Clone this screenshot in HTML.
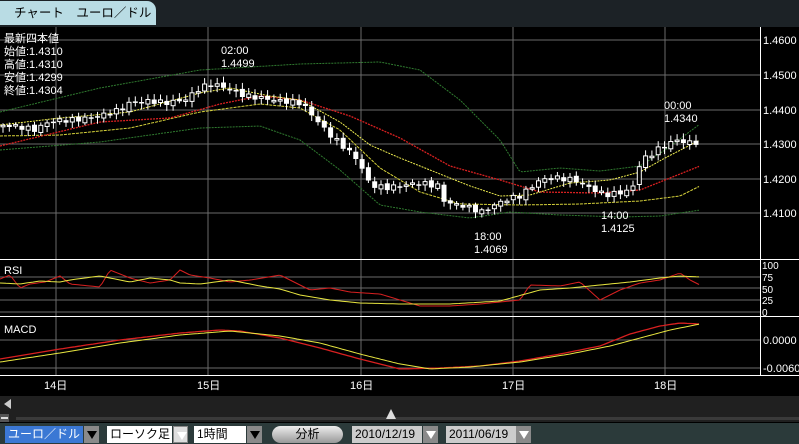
<!DOCTYPE html>
<html><head><meta charset="utf-8">
<style>
html,body{margin:0;padding:0;background:#000;width:799px;height:444px;overflow:hidden;font-family:"Liberation Sans","Noto Sans CJK JP",sans-serif}
#top{position:absolute;left:0;top:0;width:799px;height:27px;background:#1c2226}
#tab{position:absolute;left:0;top:1px;width:156px;height:24px;background:#b9dce4;border-radius:0 9px 0 0;color:#000;font-size:12.5px;line-height:24px;padding-left:14px;box-sizing:border-box;white-space:nowrap}
svg{position:absolute;left:0;top:0}
#scroll{position:absolute;left:0;top:396px;width:799px;height:26px;background:#202020}
#tb{position:absolute;left:0;top:423px;width:799px;height:21px;background:#2b3a3a}
.b{position:absolute;top:3px;height:17px;font-size:12px;line-height:17px;box-sizing:border-box;padding-left:3px;color:#000;white-space:nowrap;overflow:hidden}
.ar{position:absolute;top:3px;height:17px;width:15px;background:#8a8a8a}
.ar:after{content:"";position:absolute;left:3px;top:5px;border-left:5px solid transparent;border-right:5px solid transparent;border-top:8px solid #000}
.ar.w:after{border-top-color:#fff}
</style></head><body>
<div id="top"><div id="tab">チャート　ユーロ／ドル</div></div>
<svg id="s" width="799" height="444" xmlns="http://www.w3.org/2000/svg" font-family="Liberation Sans, Noto Sans CJK JP, sans-serif" font-size="11"></svg>
<div id="scroll">
<div style="position:absolute;left:4px;top:3px;width:0;height:0;border-top:5px solid transparent;border-bottom:5px solid transparent;border-right:7px solid #ccc"></div>
<div style="position:absolute;left:16px;top:21px;width:783px;height:3px;background:#3a3a3a"></div>
<div style="position:absolute;left:0;top:18px;width:9px;height:8px;background:#555"><div style="position:absolute;left:1px;top:3px;width:7px;height:2px;background:#ddd"></div></div>
<div style="position:absolute;left:386px;top:13px;width:0;height:0;border-left:5px solid transparent;border-right:5px solid transparent;border-bottom:10px solid #ddd"></div>
</div>
<div id="tb">
<div class="b" style="left:5px;width:78px;background:#3b78d4;color:#fff">ユーロ／ドル</div>
<div class="ar" style="left:84px"></div>
<div class="b" style="left:107px;width:65px;background:#fff">ローソク足</div>
<div class="ar w" style="left:173px;background:#ddd;border:1px solid #888;box-sizing:border-box"></div>
<div class="b" style="left:194px;width:52px;background:#fff">1時間</div>
<div class="ar" style="left:247px"></div>
<div class="b" style="left:272px;width:71px;background:linear-gradient(#eee,#999);border-radius:9px;text-align:center;padding:0">分析</div>
<div class="b" style="left:352px;width:70px;background:#ccc">2010/12/19</div>
<div class="ar w" style="left:423px"></div>
<div class="b" style="left:446px;width:70px;background:#ccc">2011/06/19</div>
<div class="ar w" style="left:516px"></div>
</div>
<script>
(function(){
var s=document.getElementById('s'),h='';
function L(x1,y1,x2,y2,c,w,d){h+='<line x1="'+x1+'" y1="'+y1+'" x2="'+x2+'" y2="'+y2+'" stroke="'+c+'" stroke-width="'+(w||1)+'"'+(d?' stroke-dasharray="'+d+'"':'')+'/>';}
function T(x,y,t,c,a){h+='<text x="'+x+'" y="'+y+'" fill="'+(c||'#fff')+'"'+(a?' text-anchor="'+a+'"':'')+'>'+t+'</text>';}
function interp(k,x){for(var i=0;i<k.length-1;i++){if(x>=k[i][0]&&x<=k[i+1][0]){var t=(x-k[i][0])/(k[i+1][0]-k[i][0]);return k[i][1]+t*(k[i+1][1]-k[i][1]);}}return k[k.length-1][1];}
function P(k,c,d,w){var p='';for(var x=0;x<=700;x+=3){p+=(p?' ':'')+x+','+interp(k,x).toFixed(1);}h+='<polyline points="'+p+'" fill="none" stroke="'+c+'" stroke-width="'+(w||1)+'"'+(d?' stroke-dasharray="'+d+'"':'')+'/>';}
[40,75,110,144,179,213].forEach(function(y){L(0,y,760,y,'#6a6a6a');});
[277,288,300,312].forEach(function(y){L(0,y,760,y,'#6a6a6a');});
[340,368].forEach(function(y){L(0,y,760,y,'#6a6a6a');});
[56,208,361,513,665].forEach(function(x){L(x,27,x,375,'#6a6a6a');});
L(0,259.5,799,259.5,'#fff');L(0,316.5,799,316.5,'#fff');L(0,375.5,799,375.5,'#fff');
L(760.5,27,760.5,375,'#fff');
[['1.4600',40],['1.4500',75],['1.4400',110],['1.4300',144],['1.4200',179],['1.4100',213]].forEach(function(a){T(763,a[1]+4,a[0]);});
h+='<g font-size="10">';[['100',266],['75',278],['50',290],['25',301],['0',313]].forEach(function(a){T(762,a[1]+3,a[0]);});h+='</g>';
T(763,344,'0.0000');T(763,372,'-0.0060');
P([[0,112],[100,88],[200,70],[300,64],[380,62],[420,70],[460,100],[500,140],[520,172],[560,168],[600,171],[640,166],[665,150],[700,124]],'#2f7a2f','2,1');
P([[0,150],[100,142],[200,128],[260,126],[300,140],[340,170],[380,205],[420,212],[470,218],[510,212],[560,215],[620,217],[660,216],[700,210]],'#2f7a2f','2,1');
P([[0,136],[60,135],[130,128],[200,112],[260,104],[300,108],[340,130],[380,168],[420,192],[460,204],[520,205],[580,204],[640,201],[680,196],[700,186]],'#d6d23a','3,1');
P([[0,146],[100,122],[170,118],[220,104],[260,96],[300,100],[350,116],[400,138],[450,166],[500,180],[540,192],[600,193],[640,190],[665,180],[700,166]],'#d82020','2,1',1.3);
P([[0,125],[60,118],[130,112],[200,93],[230,88],[270,96],[300,100],[340,122],[370,145],[400,158],[430,170],[470,186],[500,196],[530,195],[570,183],[610,180],[640,172],[665,158],[700,140]],'#f0ee50','2,1');
var ck=[[0,125],[20,127],[35,130],[50,121],[75,120],[100,116],[120,110],[130,103],[150,101],[165,103],[185,100],[200,88],[212,84],[230,89],[245,96],[260,98],[280,101],[300,103],[308,110],[318,122],[330,135],[345,148],[358,160],[370,185],[385,188],[400,186],[418,183],[438,186],[445,203],[460,205],[470,208],[482,212],[495,205],[505,200],[520,196],[540,180],[555,178],[575,180],[590,188],[605,195],[625,192],[635,185],[640,162],[660,148],[675,140],[690,143],[700,142]];
var prev=interp(ck,0);
for(var i=0;i<112;i++){var x=3+i*6.3;if(x>702)break;var c=interp(ck,x)+Math.sin(i*2.7)*2.5;var o=prev+Math.cos(i*1.9)*1.5;var tp=Math.min(o,c),bt=Math.max(o,c);if(bt-tp<1.5)bt=tp+1.5;var hi=tp-2-Math.abs(Math.sin(i*3.1))*4,lo=bt+2+Math.abs(Math.cos(i*2.3))*4;
L(x.toFixed(1),hi.toFixed(1),x.toFixed(1),lo.toFixed(1),'#fff');
if(c>o)h+='<rect x="'+(x-2.5).toFixed(1)+'" y="'+tp.toFixed(1)+'" width="5" height="'+(bt-tp).toFixed(1)+'" fill="#fff"/>';
else h+='<rect x="'+(x-2).toFixed(1)+'" y="'+tp.toFixed(1)+'" width="4" height="'+(bt-tp).toFixed(1)+'" fill="#000" stroke="#fff"/>';
prev=c;}
P([[0,279],[10,275],[20,288],[30,284],[45,282],[60,276],[70,284],[90,286],[100,287],[110,270],[130,278],[150,283],[170,280],[180,270],[190,275],[210,278],[230,282],[250,280],[280,275],[310,290],[330,288],[350,292],[380,294],[400,300],[420,306],[450,306],[480,304],[520,300],[530,285],[560,286],[580,282],[600,300],[620,290],[640,283],[660,280],[680,273],[690,280],[700,285]],'#d82020');
P([[0,283],[20,284],[40,281],[60,282],[70,280],[100,276],[130,282],[150,278],[170,280],[180,283],[200,284],[230,280],[260,286],[280,289],[300,295],[330,300],[360,303],[400,304],[450,304],[500,301],[540,290],[570,288],[600,285],[630,282],[660,278],[680,276],[700,277]],'#e8e640');
P([[0,359],[60,349],[120,340],[180,333],[220,330],[240,331],[280,338],[320,348],[360,359],[400,369],[440,368],[480,366],[520,361],[560,354],[600,346],[630,334],[660,326],[680,323],[700,324]],'#d82020',null,1.3);
P([[0,362],[60,353],[120,343],[180,335],[230,331],[280,336],[320,343],[360,354],[400,364],[430,369],[470,367],[520,362],[570,354],[610,346],[640,338],[670,330],[700,324]],'#e8e640');
T(4,42,'最新四本値');T(4,55,'始値:1.4310');T(4,68,'高値:1.4310');T(4,81,'安値:1.4299');T(4,94,'終値:1.4304');
T(221,54,'02:00');T(221,67,'1.4499');
T(664,109,'00:00');T(664,122,'1.4340');
T(474,240,'18:00');T(474,253,'1.4069');
T(601,219,'14:00');T(601,232,'1.4125');
T(4,274,'RSI');T(4,333,'MACD');
T(44,389,'14日');T(197,389,'15日');T(350,389,'16日');T(502,389,'17日');T(654,389,'18日');
s.innerHTML=h;
})();
</script>
</body></html>
